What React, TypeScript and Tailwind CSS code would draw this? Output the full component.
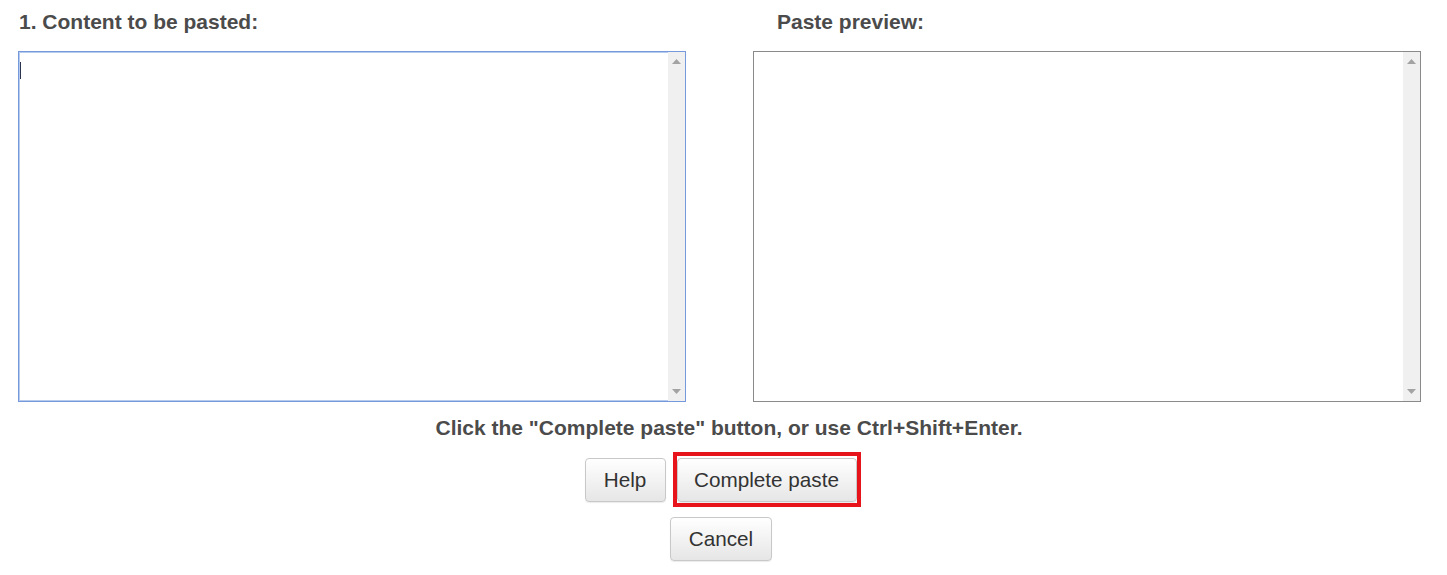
import React from "react";

// Fake textarea: white box with a classic scrollbar track and arrow glyphs.
function PasteBox({ focused, caret }: { focused?: boolean; caret?: boolean }) {
  return (
    <div
      className={
        "flex h-[351px] w-[668px] border bg-white " +
        (focused
          ? "border-[#7699dc] shadow-[inset_1px_1px_0_0_#b7cbef,inset_-1px_-1px_0_0_#b7cbef]"
          : "border-[#8a8a8a]")
      }
    >
      <div className="flex-1 pl-[1px] pt-[10px]">
        {caret && <div className="h-[17px] w-[1px] bg-[#2a3350]" />}
      </div>
      <div className="flex w-[17px] flex-col items-center justify-between bg-[#f0f0f0] py-[7px]">
        <svg width="9" height="5" viewBox="0 0 9 5">
          <polygon points="4.5,0 9,5 0,5" fill="#a3a3a3" />
        </svg>
        <svg width="9" height="5" viewBox="0 0 9 5">
          <polygon points="0,0 9,0 4.5,5" fill="#a3a3a3" />
        </svg>
      </div>
    </div>
  );
}

function Btn({ children, className = "" }: { children: React.ReactNode; className?: string }) {
  return (
    <button
      className={
        "h-[44px] rounded-[4px] border border-[#c8c8c8] bg-gradient-to-b from-white to-[#e6e6e6] text-[20.7px] text-[#333] shadow-[0_1px_1px_rgba(0,0,0,0.08)] " +
        className
      }
    >
      {children}
    </button>
  );
}

export default function App() {
  return (
    <div className="h-[575px] w-[1447px] bg-white font-['Liberation_Sans',Arial,sans-serif]">
      <div className="flex gap-[67px] pl-[18px]">
        <div className="flex flex-col">
          <div className="pl-[1px] pt-[10px] pb-[17px] text-[21px] font-bold leading-[24px] text-[#4b4b4b]">
            1. Content to be pasted:
          </div>
          <PasteBox focused caret />
        </div>
        <div className="flex flex-col">
          <div className="pl-[24px] pt-[10px] pb-[17px] text-[21px] font-bold leading-[24px] text-[#4b4b4b]">
            Paste preview:
          </div>
          <PasteBox />
        </div>
      </div>

      <div className="flex flex-col items-center">
        <div className="mt-[14px] pl-[11px] text-[21px] font-bold leading-[24px] text-[#4b4b4b]">
          Click the "Complete paste" button, or use Ctrl+Shift+Enter.
        </div>
        <div className="mt-[12px] mr-[2px] flex items-center gap-[7px]">
          <Btn className="w-[81px]">Help</Btn>
          <div className="border-4 border-[#e8141c] pt-[2px] pb-[1px]">
            <Btn className="w-[180px]">Complete paste</Btn>
          </div>
        </div>
        <Btn className="mt-[10px] mr-[5px] h-[43px] w-[102px]">Cancel</Btn>
      </div>
    </div>
  );
}
